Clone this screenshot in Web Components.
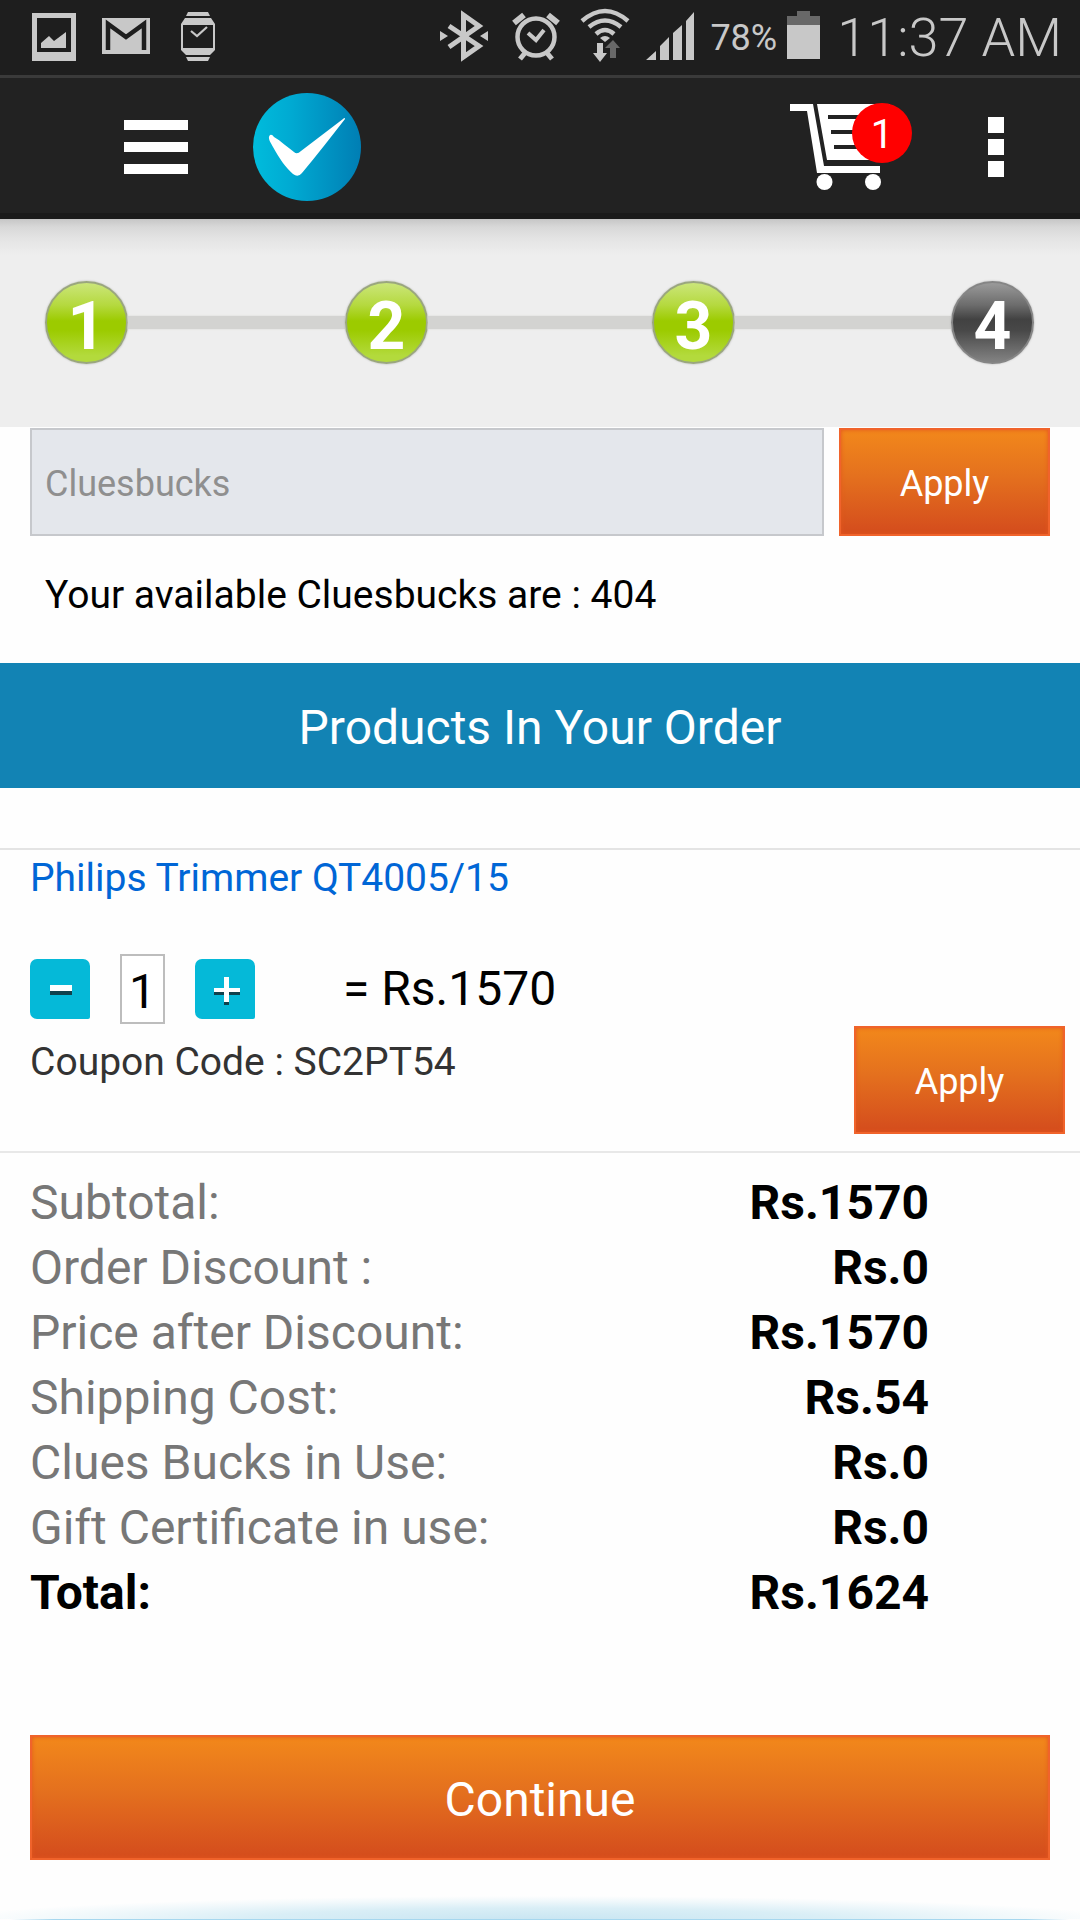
<!DOCTYPE html>
<html lang="en">
<head>
<meta charset="utf-8">
<meta name="viewport" content="width=device-width, initial-scale=1">
<title>Order review</title>
<style>
  body { margin: 0; background: #fefefe; font-family: Roboto, "Noto Sans", sans-serif; color: #000; }
</style>
</head>
<body>
<checkout-page></checkout-page>
<script>
const define = (name, html) => {
  const template = document.createElement('template');
  template.innerHTML = html;
  customElements.define(name, class extends HTMLElement {
    constructor() {
      super();
      this.attachShadow({ mode: 'open' }).appendChild(template.content.cloneNode(true));
    }
  });
};

define('status-bar', `
<style>
  :host { display: flex; justify-content: space-between; align-items: center; height: 75px; padding: 0 18px 0 30px; background: #1e1e1e; border-bottom: 3px solid #3a3a3a; color: #c8c8c8; }
  div { display: flex; align-items: center; }
  .left { gap: 24px; }
  .right { gap: 16px; }
  .battery { gap: 9px; }
  svg { display: block; fill: #c8c8c8; flex: none; }
  .pct { font-size: 36px; line-height: 48px; }
  .time { font-size: 54px; line-height: 60px; font-weight: 300; }
</style>
<div class="left">
  <svg width="48" height="75" viewBox="30 0 48 75"><path fill-rule="evenodd" d="M32 13H76V61H32ZM37 18V52H71V18Z"/><path d="M41 48V43L49 36L54 41L66 32V48Z"/></svg>
  <svg width="48" height="75" viewBox="102 0 48 75"><path d="M102 18H150V54H102Z"/><path d="M108 50V24L126 37L144 24V50" fill="none" stroke="#1e1e1e" stroke-width="4.5"/></svg>
  <svg width="48" height="75" viewBox="174 0 48 75"><path d="M188 12H208L210 16H186Z"/><path fill-rule="evenodd" d="M185 18H211L215 24V50L210 55H186L181 50V24ZM183 25V48H213V25Z"/><path d="M186 57H210L208 61H188Z"/><path d="M191 31L197 36L207 27" fill="none" stroke="#c8c8c8" stroke-width="2.2"/></svg>
</div>
<div class="right">
  <svg width="56" height="75" viewBox="437 0 56 75"><path d="M450 26L480 46L464.500 57V15L480 26L450 47" fill="none" stroke="#c8c8c8" stroke-width="5"/><path d="M441 31L449 36L441 41ZM489 31L481 36L489 41Z"/></svg>
  <svg width="56" height="75" viewBox="509 0 56 75"><g fill="none" stroke="#c8c8c8"><circle cx="537" cy="37" r="18.500" stroke-width="4.500"/><path d="M529 33L537 40L545 30" stroke-width="4"/><path d="M515 23L525 15M559 23L549 15" stroke-width="6"/><path d="M526 53L521 59M548 53L553 59" stroke-width="5"/></g></svg>
  <svg width="50" height="75" viewBox="581 0 50 75"><g fill="none" stroke="#c8c8c8" stroke-width="4.500"><path d="M583 21Q606 1 629 21"/><path d="M590 27Q606 14 622 27"/><path d="M597 34Q606 26 615 34"/></g><path d="M601 38Q606 34 611 38L606 42Z"/><path d="M598 43H604V53H608L601 62L594 53H598Z"/><path fill="#686868" d="M611 58V48H606L614 40L621 48H617V58Z"/></svg>
  <svg width="48" height="75" viewBox="645 0 48 75"><path d="M645 60L655 51V60ZM659 60V46L668 37V60ZM672 60V33L681 25V60ZM685 60V21L693 12V60Z"/></svg>
  <div class="battery"><span class="pct">78%</span>
  <svg width="35" height="75" viewBox="785 0 35 75"><path fill="#686868" d="M796 11H809V16H819V25H786V16H796Z"/><path d="M786 25H819V59H786Z"/></svg></div>
  <span class="time">11:37 AM</span>
</div>`);

define('app-header', `
<style>
  :host { display: flex; align-items: center; height: 132px; padding: 3px 76px 0 124px; background: #222; border-bottom: 6px solid #1b1b1b; }
  button { display: block; margin: 0; padding: 0; border: 0; background: none; font: inherit; color: #fff; cursor: pointer; }
  svg { display: block; }
  a { margin-left: 65px; margin-right: auto; }
  .cart { position: relative; margin-right: 76px; }
  .badge { position: absolute; right: 0; top: 0; width: 60px; height: 60px; border-radius: 50%; background: #f00; font-size: 40px; line-height: 63px; text-align: center; }
</style>
<button aria-label="Menu"><svg width="64" height="54" fill="#fff"><path d="M0 0H64V10H0ZM0 22H64V32H0ZM0 44H64V54H0Z"/></svg></button>
<a href="#" aria-label="Home"><svg width="108" height="108" viewBox="0 0 108 108"><defs><linearGradient id="g"><stop offset="0" stop-color="#00bcdc"/><stop offset=".35" stop-color="#00aad2"/><stop offset="1" stop-color="#007eb4"/></linearGradient></defs><circle cx="54" cy="54" r="54" fill="url(#g)"/><path fill="#fff" d="M17 42C14 45 18 50 20 54C26 65 33 75 40 81Q45 85 49 80C64 62 78 44 92 26Q92 24 90 26L48 58Q44 62 41 59C34 54 28 48 21 44Q19 41 17 42Z"/></svg></a>
<button class="cart" aria-label="Cart"><svg width="122" height="88" viewBox="790 103 122 88"><path fill="#fff" d="M790 104H813L824 166H880V173H817L807 111H790ZM817 104H890L874 160H827Z"/><circle cx="824.500" cy="182" r="8" fill="#fff"/><circle cx="873" cy="182" r="8" fill="#fff"/><path stroke="#222" stroke-width="4" d="M828 117H870M831 132H870M834 147H870"/></svg><span class="badge">1</span></button>
<button aria-label="More options"><svg width="16" height="60" fill="#fff"><path d="M0 0H16V16H0ZM0 22H16V38H0ZM0 44H16V60H0Z"/></svg></button>`);

define('progress-step', `
<style>
  :host { display: block; flex: none; width: 83px; height: 83px; box-sizing: border-box; border: 2px solid #9aa67e; border-radius: 50%; background: linear-gradient(#cbe67a, #b5d93f 28%, #9ccb00 48%, #9ccb00 60%, #b3da3c 92%); box-shadow: 0 0 2px #aaa; color: #fff; font-size: 66px; font-weight: 700; line-height: 88px; text-align: center; }
  :host([current]) { border-color: #858585; background: linear-gradient(#9a9a9a, #6c6c6c 28%, #424242 46%, #484848 60%, #808080 98%); }
</style><slot></slot>`);

define('progress-steps', `
<style>
  :host { display: flex; align-items: center; padding: 62px 46px 63px 45px; background: linear-gradient(#c6c6c6, #d8d8d8 8px, #e4e4e4 20px, #eee 36px); }
  i { height: 13px; background: #d3d3d1; box-shadow: 0 0 2px #d9d9d7; }
</style>
<progress-step>1</progress-step><i style="flex:218"></i><progress-step>2</progress-step><i style="flex:225"></i><progress-step>3</progress-step><i style="flex:217"></i><progress-step current>4</progress-step>`);

define('orange-button', `
<style>
  :host { display: block; width: 211px; flex: none; }
  button { display: block; width: 100%; height: 108px; margin: 0; padding: 4px 0 0; border: 2px solid #f0632b; background: linear-gradient(#f2881b, #e4701e 45%, #d44c1d); box-shadow: inset 0 0 4px #e4571e; color: #fff; font: inherit; font-size: 36px; cursor: pointer; }
  :host([wide]) { width: auto; }
  :host([wide]) button { height: 125px; font-size: 48px; }
</style><button><slot></slot></button>`);

define('cluesbucks-form', `
<style>
  :host { display: block; padding: 1px 30px 0; }
  .row { display: flex; gap: 15px; }
  input { flex: 1; min-width: 0; height: 108px; box-sizing: border-box; margin: 0; padding: 4px 13px 0; border: 2px solid #c6c8cc; border-radius: 0; background: #e4e7ec; font: inherit; font-size: 36px; color: #333; }
  input::placeholder { color: #8f8f8f; opacity: 1; }
  p { margin: 0; padding: 35px 15px 44px; font-size: 39px; line-height: 48px; }
</style>
<div class="row"><input type="text" aria-label="Cluesbucks" placeholder="Cluesbucks"><orange-button>Apply</orange-button></div>
<p>Your available Cluesbucks are : 404</p>`);

define('section-title', `
<style>
  :host { display: block; background: #1283b4; color: #fff; }
  h2 { margin: 0; padding: 39px 0 34px; font-size: 48px; line-height: 52px; font-weight: 400; text-align: center; }
</style><h2><slot></slot></h2>`);

define('quantity-picker', `
<style>
  :host { display: flex; align-items: center; gap: 30px; }
  button { width: 60px; height: 60px; margin: 0; padding: 0; border: 0; border-radius: 7px 7px 2px 7px; background: #05b9d8; cursor: pointer; }
  svg { display: block; }
  input { width: 45px; height: 70px; box-sizing: border-box; margin: 0; padding: 4px 0 0; border: 2px solid #bdbdbd; border-radius: 0; background: #fff; color: #000; font: inherit; font-size: 48px; text-align: center; }
</style>
<button aria-label="Decrease quantity"><svg width="60" height="60"><path fill="#10414c" d="M20 31H42V36H20Z"/><path fill="#fff" d="M20 26H42V32H20Z"/></svg></button>
<input type="text" inputmode="numeric" aria-label="Quantity" value="1">
<button aria-label="Increase quantity"><svg width="60" height="60"><path fill="#10414c" d="M19 31H45V36H19ZM29 42H34V46H29Z"/><path fill="#fff" d="M19 29H29V18H34V29H45V33H34V43H29V33H19Z"/></svg></button>`);

define('order-item', `
<style>
  :host { display: block; margin-top: 60px; padding: 4px 15px 17px 30px; border-top: 2px solid #e4e4e4; border-bottom: 2px solid #e8e8e8; }
  a { display: block; font-size: 39px; line-height: 48px; color: #0066d6; text-decoration: none; }
  .qty { display: flex; align-items: center; gap: 88px; margin-top: 52px; }
  .price { font-size: 48px; line-height: 56px; }
  .coupon { display: flex; justify-content: space-between; align-items: flex-start; margin-top: 2px; }
  .code { padding-top: 12px; font-size: 39px; line-height: 48px; color: #333; }
</style>
<a href="#"><slot name="title"></slot></a>
<div class="qty"><quantity-picker></quantity-picker><span class="price">= <slot name="price"></slot></span></div>
<div class="coupon"><span class="code">Coupon Code : <slot name="code"></slot></span><orange-button>Apply</orange-button></div>`);

define('order-summary', `
<style>
  :host { display: block; padding: 17px 151px 0 30px; }
  table { width: 100%; border-collapse: collapse; font-size: 48px; line-height: 65px; }
  th, td { padding: 0; height: 65px; white-space: nowrap; }
  th { font-weight: 400; text-align: left; color: #777; }
  td { font-weight: 700; text-align: right; }
  tr:last-child th { font-weight: 700; color: #000; }
</style>
<table><tbody>
<tr><th scope="row">Subtotal:</th><td>Rs.1570</td></tr>
<tr><th scope="row">Order Discount :</th><td>Rs.0</td></tr>
<tr><th scope="row">Price after Discount:</th><td>Rs.1570</td></tr>
<tr><th scope="row">Shipping Cost:</th><td>Rs.54</td></tr>
<tr><th scope="row">Clues Bucks in Use:</th><td>Rs.0</td></tr>
<tr><th scope="row">Gift Certificate in use:</th><td>Rs.0</td></tr>
<tr><th scope="row">Total:</th><td>Rs.1624</td></tr>
</tbody></table>`);

define('checkout-page', `
<style>
  :host { display: block; }
  .continue { padding: 110px 30px 36px; }
  .glow { height: 24px; background: linear-gradient(90deg, #fefefe 1%, #a6d7ee 5%, #a6d7ee 95%, #fefefe 99%) bottom / 100% 1px no-repeat, radial-gradient(ellipse 54% 100% at 50% 100%, #c8e5f2, #d9eef6 50%, #f0f8fb 80%, #fefefe); }
</style>
<status-bar></status-bar>
<app-header></app-header>
<main>
<progress-steps></progress-steps>
<cluesbucks-form></cluesbucks-form>
<section-title>Products In Your Order</section-title>
<order-item><span slot="title">Philips Trimmer QT4005/15</span><span slot="price">Rs.1570</span><span slot="code">SC2PT54</span></order-item>
<order-summary></order-summary>
<div class="continue"><orange-button wide>Continue</orange-button></div>
</main>
<div class="glow"></div>`);
</script>
</body>
</html>
